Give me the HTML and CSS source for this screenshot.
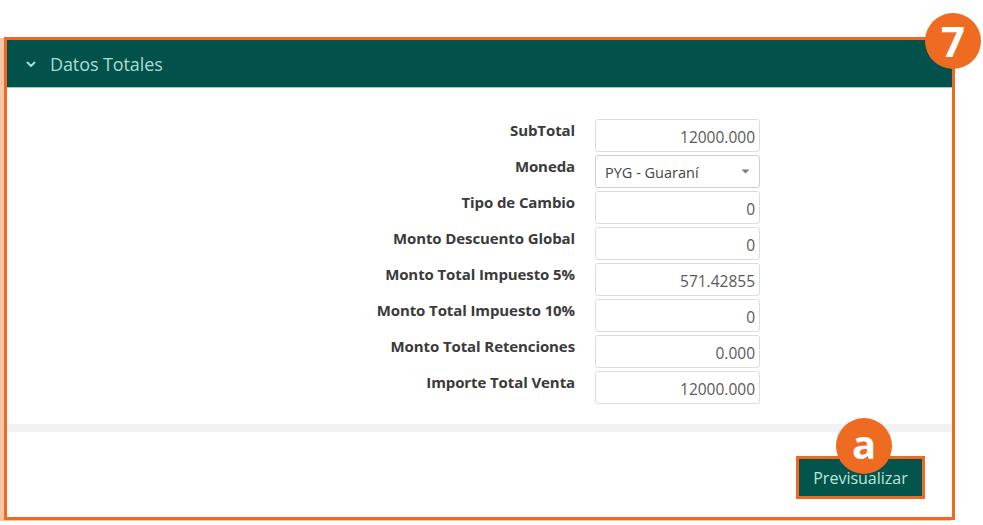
FILE: index.html
```html
<!DOCTYPE html>
<html lang="es">
<head>
<meta charset="utf-8">
<title>Datos Totales</title>
<link rel="stylesheet" href="styles.css">
</head>
<body>
<div class="page">
  <div class="frame">
    <div class="badge badge-7">7</div>
    <div class="panel-header">
      <svg class="chevron" width="10" height="7" viewBox="0 0 10 7"><path d="M1.5 1.5 L5 5 L8.5 1.5" fill="none" stroke="#a6ddd3" stroke-width="2" stroke-linecap="round" stroke-linejoin="round"/></svg>
      <span class="panel-title">Datos Totales</span>
    </div>
    <div class="panel-body">
      <div class="form">
        <div class="row"><label class="lbl">SubTotal</label><div class="field">12000.000</div></div>
        <div class="row"><label class="lbl">Moneda</label><div class="field select"><span>PYG - Guaraní</span><svg class="caret" width="9" height="5" viewBox="0 0 9 5"><path d="M0.5 0.5 L8.5 0.5 L4.5 4.5 Z" fill="#7a7a7a"/></svg></div></div>
        <div class="row"><label class="lbl">Tipo de Cambio</label><div class="field">0</div></div>
        <div class="row"><label class="lbl">Monto Descuento Global</label><div class="field">0</div></div>
        <div class="row"><label class="lbl">Monto Total Impuesto 5%</label><div class="field">571.42855</div></div>
        <div class="row"><label class="lbl">Monto Total Impuesto 10%</label><div class="field">0</div></div>
        <div class="row"><label class="lbl">Monto Total Retenciones</label><div class="field">0.000</div></div>
        <div class="row"><label class="lbl">Importe Total Venta</label><div class="field">12000.000</div></div>
      </div>
    </div>
    <div class="band"></div>
    <div class="footer">
      <div class="btn-wrap">
        <div class="badge badge-a">a</div>
        <button class="btn">Previsualizar</button>
      </div>
    </div>
  </div>
</div>
</body>
</html>
```

FILE: styles.css
```css
* { box-sizing: border-box; }
html, body { margin: 0; padding: 0; background: #ffffff; }
body { font-family: "Open Sans", "Noto Sans", sans-serif; color: #333; }

.page {
  padding: 37px 0 0 4px;
  width: 983px;
  height: 525px;
}

.frame {
  position: relative;
  width: 951px;
  height: 483px;
  border: 3px solid #ee6a22;
  box-shadow: -4px 1px 0 0 #f9c6a3;
  background: #ffffff;
  display: flex;
  flex-direction: column;
}

.badge {
  position: absolute;
  width: 56px;
  height: 56px;
  border-radius: 50%;
  background: #ef6b21;
  color: #ffffff;
  font-weight: 700;
  display: flex;
  align-items: center;
  justify-content: center;
  z-index: 2;
}
.badge-7 {
  left: 918px;
  top: -27px;
  font-size: 42px;
  line-height: 1;
}
.badge-a {
  left: 37px;
  top: -41px;
  font-size: 40px;
  line-height: 1;
  padding-bottom: 4px;
}

.panel-header {
  height: 48px;
  background: #02514b;
  border-bottom: 1px solid #8fd3d0;
  display: flex;
  align-items: center;
  padding-left: 19px;
  flex-shrink: 0;
}
.chevron { margin-right: 14px; margin-top: 1px; }
.panel-title {
  color: #a9ddd4;
  font-size: 18px;
  letter-spacing: -0.1px;
}

.panel-body {
  flex: 1;
  padding-top: 31px;
}
.form {
  display: flex;
  flex-direction: column;
  gap: 3px;
}
.row {
  display: flex;
  align-items: flex-start;
  height: 33px;
}
.lbl {
  width: 568px;
  text-align: right;
  font-weight: 700;
  font-size: 15px;
  line-height: 20px;
  padding-top: 1px;
  color: #3a3a3a;
  letter-spacing: -0.1px;
}
.field {
  margin-left: 20px;
  width: 165px;
  height: 33px;
  border: 1px solid #dcdcdc;
  border-radius: 3px;
  font-size: 15.5px;
  color: #5a5a5a;
  text-align: right;
  padding: 0 4px 0 6px;
  line-height: 31px;
  padding-top: 2px;
}
.select {
  display: flex;
  align-items: center;
  justify-content: space-between;
  text-align: left;
  padding-left: 9px;
  padding-right: 9px;
  border-color: #cfcfcf;
  font-size: 14.5px;
  color: #444;
}
.caret { margin-top: -2px; }

.band {
  height: 8px;
  background: #f2f2f2;
  flex-shrink: 0;
}

.footer {
  height: 85px;
  flex-shrink: 0;
  display: flex;
  justify-content: flex-end;
  align-items: flex-start;
  padding-top: 24px;
  padding-right: 27px;
}
.btn-wrap {
  position: relative;
  border: 3px solid #ee6a22;
}
.btn {
  display: block;
  width: 123px;
  height: 37px;
  border: 0;
  margin: 0;
  background: #02544c;
  color: #bde6dc;
  font-family: "Open Sans", "Noto Sans", sans-serif;
  font-size: 16px;
  padding: 0;
  letter-spacing: 0;
}
```
